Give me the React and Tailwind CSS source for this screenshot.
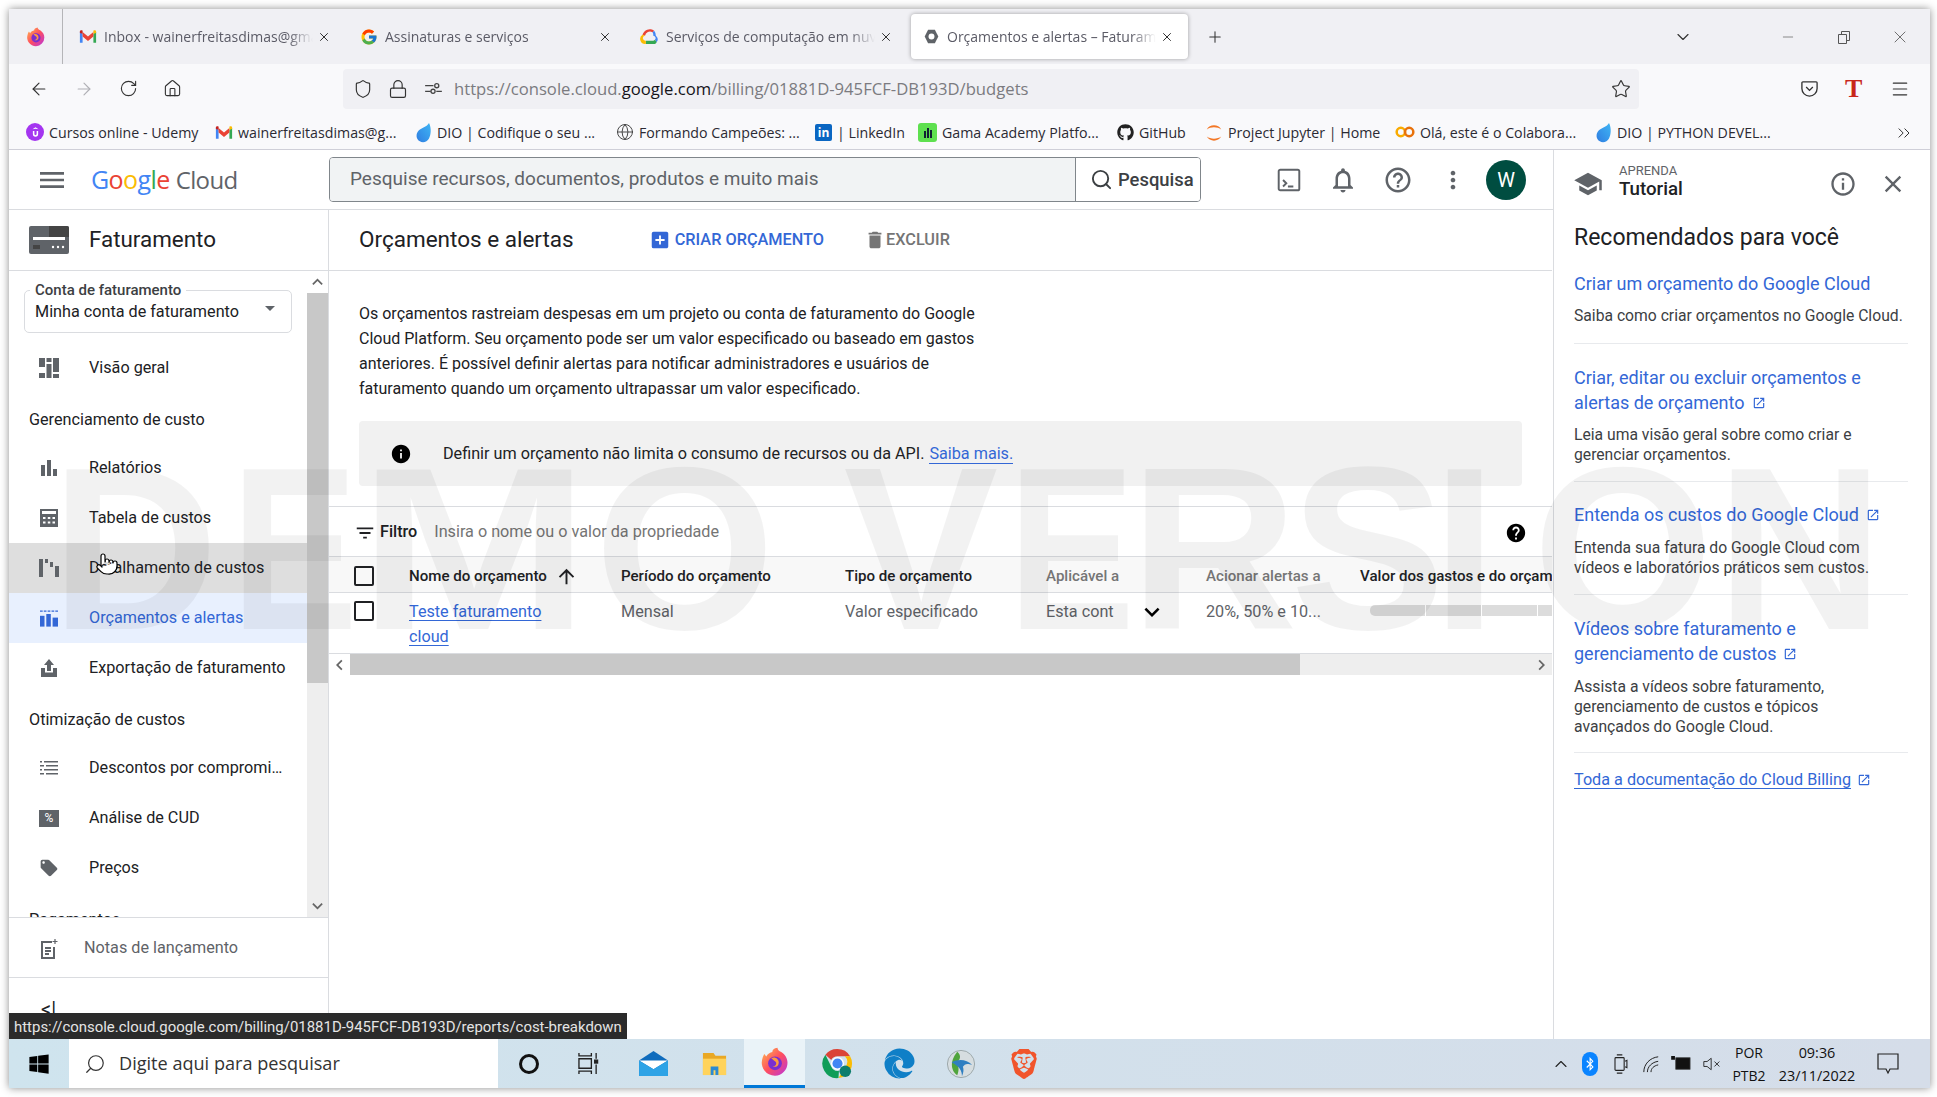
import React from 'react';
import { ArrowLeft, ArrowRight, RotateCw, Home, Shield, Lock, Star, Menu, Plus, X, ChevronDown, ChevronsRight, Minus, Globe, Search, ChevronUp, Pointer } from 'lucide-react';
import { FcGoogle } from 'react-icons/fc';
import { FaGithub, FaEdge, FaWindows, FaBluetoothB } from 'react-icons/fa';
import { SiBrave } from 'react-icons/si';
import {
  MdMenu, MdNotificationsNone, MdHelpOutline, MdMoreVert, MdSchool, MdInfoOutline, MdClose,
  MdArrowDropDown, MdBarChart, MdLocalOffer, MdKeyboardArrowUp, MdKeyboardArrowDown,
  MdKeyboardArrowLeft, MdKeyboardArrowRight, MdAddBox, MdDelete, MdInfo, MdHelp, MdFilterList, MdArrowUpward, MdOpenInNew
} from 'react-icons/md';

const GmailIcon = () => (
  <svg viewBox="0 0 20 16" className="w-[18px] h-[15px] shrink-0">
    <path d="M1 15V3l3 2v10z" fill="#4285f4" />
    <path d="M19 15V3l-3 2v10z" fill="#34a853" />
    <path d="M4 8V3L10 8l6-5v5l-6 5z" fill="#ea4335" />
    <path d="M1 4V2.500C1 1 3 .5 4 1.500l0 3.500z" fill="#c5221f" />
    <path d="M19 4V2.500C19 1 17 .5 16 1.500L16 5z" fill="#fbbc04" />
  </svg>
);

const GcpIcon = () => (
  <svg viewBox="0 0 24 20" className="w-[20px] h-[17px] shrink-0">
    <path d="M15 5 17 3a9 9 0 0 0-14 5l3 1a6 6 0 0 1 9-4z" fill="#ea4335" />
    <path d="M19 9a9 9 0 0 0-2-6l-2 2a6 6 0 0 1 1 4 3 3 0 0 1 2 5l2 3a6 6 0 0 0-1-8z" fill="#4285f4" />
    <path d="M7 19h11a5 5 0 0 0 2-2l-2-3a3 3 0 0 1-2 1H7z" fill="#34a853" />
    <path d="M7 19v-4a3 3 0 0 1-1-6L3 8a6 6 0 0 0 4 11z" fill="#fbbc04" />
  </svg>
);

const FirefoxIcon = ({ size = 20 }) => (
  <svg viewBox="0 0 24 24" width={size} height={size} className="shrink-0">
    <defs>
      <linearGradient id="ffa" x1="0" y1="0" x2="1" y2="1">
        <stop offset="0" stopColor="#ffbd4f" />
        <stop offset="0.5" stopColor="#ff4f5e" />
        <stop offset="1" stopColor="#b833e1" />
      </linearGradient>
    </defs>
    <path d="M12 23A10.500 10.500 0 0 1 2 9c.5-2 1.200-3 1.500-3.500L5 7.500C6 5.500 8 4.500 10 4c-.5-1 .5-3 4-3.500 0 1.500 1 2.500 3 3.500 3 2 5 5 5 8.500A10.500 10.500 0 0 1 12 23z" fill="url(#ffa)" />
    <circle cx="12" cy="13" r="5.500" fill="#7a2fd0" />
    <path d="M9 9c3-1.500 6 .5 6 3.500s-3 4-5 3c2 0 3-1 3-2.500S11 11 9 9z" fill="#ff9a3c" />
  </svg>
);

const DioIcon = () => (
  <svg viewBox="0 0 18 24" className="w-[17px] h-[22px] shrink-0">
    <defs>
      <linearGradient id="dio" x1="0" y1="1" x2="1" y2="0">
        <stop offset="0" stopColor="#2f7de1" />
        <stop offset="1" stopColor="#3fb6f5" />
      </linearGradient>
    </defs>
    <path d="M15 1c3 6 2 13 0 17-2 4-7 5-10 3C1 19 0 13 4 9c3-3 8-3 11-8z" fill="url(#dio)" />
  </svg>
);

const UdemyIcon = () => (
  <span className="w-[18px] h-[18px] rounded-full bg-[#a435f0] flex items-center justify-center shrink-0">
    <svg viewBox="0 0 12 14" className="w-[9px] h-[11px]">
      <path d="M6 0 10 2.500 6 2 2 2.500z" fill="#fff" />
      <path d="M2.500 5v4a3.500 3.500 0 0 0 7 0V5H7.500v4a1.500 1.500 0 0 1-3 0V5z" fill="#fff" />
    </svg>
  </span>
);

const GamaIcon = () => (
  <span className="w-[19px] h-[19px] rounded-[3px] bg-[#5ee04f] flex items-end justify-center gap-[1px] pb-[4px] shrink-0">
    <span className="w-[2px] h-[7px] bg-[#123]" />
    <span className="w-[2px] h-[10px] bg-[#123]" />
    <span className="w-[2px] h-[8px] bg-[#123]" />
  </span>
);

const JupyterIcon = () => (
  <svg viewBox="0 0 20 24" className="w-[18px] h-[22px] shrink-0">
    <path d="M2 8c3-6 13-6 16 0-4-3-12-3-16 0z" fill="#f37726" />
    <path d="M2 16c3 6 13 6 16 0-4 3-12 3-16 0z" fill="#f37726" />
  </svg>
);

const ColabIcon = () => (
  <svg viewBox="0 0 24 14" className="w-[20px] h-[12px] shrink-0">
    <circle cx="7" cy="7" r="5" fill="none" stroke="#f9ab00" strokeWidth="3" />
    <circle cx="17" cy="7" r="5" fill="none" stroke="#e8710a" strokeWidth="3" />
  </svg>
);

const ChromeIcon = () => (
  <svg viewBox="0 0 32 32" className="w-[31px] h-[31px]">
    <path d="M16 1a15 15 0 0 1 13 7.500H16a7.500 7.500 0 0 0-6.500 3.800L3.500 7A15 15 0 0 1 16 1z" fill="#db4437" />
    <path d="M29 8.500A15 15 0 0 1 17 31l6.500-11a7.500 7.500 0 0 0 0-11.500z" fill="#fbbc04" />
    <path d="M3.500 7 9.500 19a7.500 7.500 0 0 0 8 4.500L17 31A15 15 0 0 1 3.500 7z" fill="#0f9d58" />
    <circle cx="16" cy="16" r="6" fill="#4285f4" stroke="#fff" strokeWidth="1.500" />
    <circle cx="24" cy="24" r="6" fill="#0d7d6c" />
  </svg>
);

const GlobeLogo = () => (
  <svg viewBox="0 0 32 32" className="w-[30px] h-[30px]">
    <circle cx="16" cy="16" r="14.500" fill="#d6dde0" stroke="#9aa5a8" />
    <path d="M12 3c5 4 3 9-1 12 3 3 3 8 1 13-6-4-9-14 0-25z" fill="#4fa43c" />
    <path d="M6 14c8-4 16-3 22 3-6-2-8-1-10 2 1 3 1 6-1 10 0-6-2-10-11-15z" fill="#2f7fc1" />
  </svg>
);

const MailIcon = () => (
  <svg viewBox="0 0 32 28" className="w-[31px] h-[27px]">
    <path d="M1 11 16 1l15 10v16H1z" fill="#0f6cbd" />
    <path d="M1 11h30L16 20z" fill="#fff" />
    <path d="M1 11l15 9 15-9v16H1z" fill="#2ea3e6" />
  </svg>
);

const FolderIcon = () => (
  <svg viewBox="0 0 28 28" className="w-[27px] h-[27px]">
    <path d="M2 3h11l2 3h11v20H2z" fill="#e9a825" />
    <path d="M2 9h24v17H2z" fill="#ffd35c" />
    <path d="M10 17h8v9h-3v-5h-2v5h-3z" fill="#2a8ad4" />
  </svg>
);

const TaskViewIcon = () => (
  <svg viewBox="0 0 22 24" className="w-[21px] h-[23px]" fill="none" stroke="#222" strokeWidth="1.400">
    <path d="M1 1v3h13V1M1 23v-3h13v3M1 7h13v10H1zM19 1v6M19 13v10" />
    <rect x="17.500" y="8.500" width="3" height="3" fill="#222" />
  </svg>
);

const TerminalIcon = () => (
  <svg viewBox="0 0 24 24" className="w-[26px] h-[26px]" fill="none" stroke="#5f6368" strokeWidth="1.800">
    <rect x="2.500" y="2.500" width="19" height="19" rx="1.500" />
    <path d="m6.500 12 3 3-3 3M11 18h5" />
  </svg>
);

const BillingIcon = () => (
  <svg viewBox="0 0 40 28" className="w-[40px] h-[28px]">
    <rect width="40" height="28" rx="2" fill="#5f6368" />
    <path d="M20 0h18a2 2 0 0 1 2 2v9H20z" fill="#444" />
    <rect x="4" y="11" width="32" height="3" fill="#fff" />
    <rect x="4" y="19" width="7" height="4" fill="#444" />
    <circle cx="24" cy="21" r="1.200" fill="#fff" />
    <circle cx="29" cy="21" r="1.200" fill="#fff" />
    <circle cx="34" cy="21" r="1.200" fill="#fff" />
  </svg>
);

const OverviewIcon = () => (
  <svg viewBox="0 0 20 20" className="w-[20px] h-[20px]" fill="#5f6368">
    <rect width="6" height="9" /><rect y="15" width="6" height="5" />
    <rect x="7.500" width="5" height="4" /><rect x="7.500" y="6" width="5" height="14" />
    <rect x="14" width="6" height="14" /><rect x="14" y="16" width="6" height="4" />
  </svg>
);

const CostTableIcon = () => (
  <svg viewBox="0 0 18 18" className="w-[18px] h-[18px]">
    <rect width="18" height="18" fill="#5f6368" />
    <rect x="2" y="2" width="14" height="3" fill="#fff" />
    <path d="M3 8h2.500v2H3zM7.800 8h2.500v2H7.800zM12.500 8H15v2h-2.500zM3 12.500h2.500v2H3zM7.800 12.500h2.500v2H7.800zM12.500 12.500H15v2h-2.500z" fill="#fff" />
  </svg>
);

const BreakdownIcon = () => (
  <svg viewBox="0 0 20 20" className="w-[20px] h-[20px]" fill="#5f6368">
    <rect y="1" width="4" height="18" /><rect x="6" y="1" width="3" height="4" /><rect x="11" y="4" width="3" height="5" /><rect x="16" y="8" width="4" height="11" />
  </svg>
);

const BudgetIcon = () => (
  <svg viewBox="0 0 20 18" className="w-[18px] h-[17px]" fill="#3367d6">
    <path d="M0 0h3v1.500H0zM4.200 0h3v1.500h-3zM8.500 0h3v1.500h-3zM12.800 0h3v1.500h-3zM17 0h3v1.500h-3z" />
    <rect y="6" width="5" height="12" /><rect x="7" y="4" width="5" height="14" /><rect x="14" y="8" width="6" height="10" />
  </svg>
);

const ExportIcon = () => (
  <svg viewBox="0 0 16 18" className="w-[16px] h-[18px]" fill="#5f6368">
    <path d="M8 0 13 6H10v6H6V6H3z" />
    <path d="M0 9h4v4.500h8V9h4v9H0z" />
  </svg>
);

const DiscountListIcon = () => (
  <svg viewBox="0 0 18 14" className="w-[18px] h-[14px]" fill="#5f6368">
    <rect width="2" height="1.500" /><rect x="4" width="14" height="1.500" />
    <rect y="4" width="4" height="1.500" /><rect x="6" y="4" width="12" height="1.500" />
    <rect y="8" width="2" height="1.500" /><rect x="4" y="8" width="14" height="1.500" />
    <rect y="12" width="4" height="1.500" /><rect x="6" y="12" width="12" height="1.500" />
  </svg>
);

const NotesIcon = () => (
  <svg viewBox="0 0 18 20" className="w-[18px] h-[20px]" fill="none" stroke="#5f6368" strokeWidth="2">
    <path d="M12 3H2v16h12V8M5 9h6M5 12h6M5 15h4" />
    <path d="M15 0v5M12.500 2.500h5" strokeWidth="1.200" />
  </svg>
);

const SideItem = ({ icon, label, active, hover, truncate }) => (
  <div className={`h-[50px] flex items-center shrink-0 ${active ? 'bg-[#e8f0fe] text-[#3367d6]' : hover ? 'bg-[#dedede] text-[#202124]' : 'text-[#202124]'}`}>
    <span className="w-[80px] flex justify-center shrink-0">{icon}</span>
    <span className={`text-[16.2px] ${truncate ? 'truncate w-[197px]' : 'whitespace-nowrap'}`}>{label}</span>
  </div>
);

const SideHeading = ({ children }) => (
  <div className="h-[50px] shrink-0 pt-[4px] pl-[20px] flex items-center text-[16.2px] text-[#202124]">{children}</div>
);

const Tab = ({ icon, label, active }) => (
  <div className={`w-[277px] h-[45px] flex items-center pl-[12px] pr-[14px] shrink-0 rounded-[4px] ${active ? 'bg-white shadow-[0_0_4px_rgba(0,0,0,0.35)]' : ''}`}>
    <span className="w-[20px] flex justify-center shrink-0 mr-[-2px] ml-[-2px]">{icon}</span>
    <span className="ml-[8px] w-[209px] overflow-hidden whitespace-nowrap text-[14px] text-[#5b5b66] [mask-image:linear-gradient(to_right,black_88%,transparent)]">{label}</span>
    <X size={14} strokeWidth={1.6} className="ml-auto text-[#222]" />
  </div>
);

const Bookmark = ({ icon, label, className }) => (
  <div className={`flex items-center gap-[5px] shrink-0 text-[14.2px] text-[#2b2a33] whitespace-nowrap ${className}`}>
    {icon}
    <span>{label}</span>
  </div>
);

const PanelLink = ({ children, icon }) => (
  <p className="text-[18px] leading-[25px] text-[#3367d6]">
    {children}
    {icon && <MdOpenInNew size={14} className="inline ml-[7px] mb-[2px]" />}
  </p>
);

const PanelDesc = ({ children, className }) => (
  <p className={`text-[15.7px] leading-[20px] text-[#3c4043] ${className}`}>{children}</p>
);

const TaskbarClock = () => (
  <>
    <div className="ml-[9px] w-[38px] text-center text-[14px] leading-[23px] font-['Open_Sans',sans-serif] text-[#111] shrink-0">POR<br />PTB2</div>
    <div className="ml-[7px] w-[84px] text-center text-[14.4px] leading-[23px] font-['Open_Sans',sans-serif] text-[#111] shrink-0">09:36<br />23/11/2022</div>
  </>
);

const App = () => {
  return (
    <div className="relative w-[1937px] h-[1097px] overflow-hidden bg-white p-[9px] font-['Roboto',sans-serif]">
      <div className="w-[1921px] h-[1079px] flex flex-col bg-white shadow-[0_0_8px_rgba(0,0,0,0.45)]">
        {/* browser tabs */}
        <div className="h-[55px] shrink-0 bg-[#f0f0f4] flex items-center font-['Open_Sans',sans-serif]">
          <div className="w-[54px] h-full flex items-center justify-center border-r border-[#b5b5b8]">
            <FirefoxIcon size={20} />
          </div>
          <div className="ml-[5px] flex items-center gap-[4px]">
            <Tab icon={<GmailIcon />} label="Inbox - wainerfreitasdimas@gmail.com" />
            <Tab icon={<FcGoogle size={18} />} label="Assinaturas e serviços" />
            <Tab icon={<GcpIcon />} label="Serviços de computação em nuvem" />
            <Tab active icon={<SettingsGlyph />} label="Orçamentos e alertas – Faturamento" />
          </div>
          <Plus size={18} strokeWidth={1.4} className="ml-[18px] text-[#333]" />
          <ChevronDown size={20} strokeWidth={1.4} className="ml-[449px] text-[#333]" />
          <Minus size={16} strokeWidth={1} className="ml-[87px] text-[#555]" />
          <svg viewBox="0 0 14 14" className="ml-[41px] w-[14px] h-[14px]" fill="none" stroke="#555">
            <path d="M1.500 4.500h8v9h-8zM4.500 4.500v-3h8v9h-3" />
          </svg>
          <X size={20} strokeWidth={1} className="ml-[39px] text-[#555]" />
        </div>

        {/* url bar */}
        <div className="h-[49px] shrink-0 bg-[#f9f9fb] flex items-center font-['Open_Sans',sans-serif]">
          <div className="w-[334px] flex items-center shrink-0 pl-[20px] gap-[25px] text-[#333]">
            <ArrowLeft size={20} strokeWidth={1.4} />
            <ArrowRight size={20} strokeWidth={1.4} className="text-[#b0b0b5]" />
            <RotateCw size={19} strokeWidth={1.4} />
            <Home size={19} strokeWidth={1.4} />
          </div>
          <div className="w-[1296px] h-[40px] rounded-[4px] bg-[#f0f0f4] flex items-center pl-[10px] shrink-0 text-[#333]">
            <Shield size={20} strokeWidth={1.4} />
            <Lock size={20} strokeWidth={1.4} className="ml-[15px]" />
            <svg viewBox="0 0 18 14" className="ml-[17px] w-[17px] h-[13px]" fill="none" stroke="#444" strokeWidth="1.400">
              <path d="M0 4h9M0 10h6M12 10h6" /><circle cx="12.500" cy="4" r="2.200" /><circle cx="8.500" cy="10" r="2.200" />
            </svg>
            <span className="ml-[12px] mt-[2px] text-[16.65px] text-[#7b7b80] whitespace-nowrap">
              https://console.cloud.<span className="text-[#15141a]">google.com</span>/billing/01881D-945FCF-DB193D/budgets
            </span>
            <Star size={20} strokeWidth={1.4} className="ml-auto mr-[8px]" />
          </div>
          <svg viewBox="0 0 20 20" className="ml-[161px] w-[19px] h-[19px]" fill="none" stroke="#333" strokeWidth="1.400">
            <path d="M3 3h14a1 1 0 0 1 1 1v6a8 8 0 0 1-16 0V4a1 1 0 0 1 1-1z" /><path d="m6.500 8.500 3.500 3.500 3.500-3.500" />
          </svg>
          <span className="ml-[26px] text-[26px] leading-none font-bold font-['Liberation_Serif',serif] text-[#c8271b]">T</span>
          <Menu size={20} strokeWidth={1.4} className="ml-[28px] text-[#333]" />
        </div>

        {/* bookmarks */}
        <div className="h-[37px] shrink-0 bg-[#f9f9fb] border-b border-[#cfcfd8] flex items-center pl-[17px] pt-[3px] font-['Open_Sans',sans-serif]">
          <Bookmark className="w-[189px]" icon={<UdemyIcon />} label="Cursos online - Udemy" />
          <Bookmark className="w-[200px]" icon={<GmailIcon />} label="wainerfreitasdimas@g..." />
          <Bookmark className="w-[201px]" icon={<DioIcon />} label="DIO | Codifique o seu ..." />
          <Bookmark className="w-[199px]" icon={<Globe size={18} strokeWidth={1.3} className="text-[#444]" />} label="Formando Campeões: ..." />
          <Bookmark
            className="w-[103px]"
            icon={<span className="w-[17px] h-[17px] rounded-[2px] bg-[#0a66c2] text-white text-[12px] leading-[17px] font-bold text-center">in</span>}
            label="| LinkedIn"
          />
          <Bookmark className="w-[199px]" icon={<GamaIcon />} label="Gama Academy Platfo..." />
          <Bookmark className="w-[88px]" icon={<FaGithub size={17} className="text-[#222]" />} label="GitHub" />
          <Bookmark className="w-[190px]" icon={<JupyterIcon />} label="Project Jupyter | Home" />
          <Bookmark className="w-[200px]" icon={<ColabIcon />} label="Olá, este é o Colabora..." />
          <Bookmark className="w-[299px]" icon={<DioIcon />} label="DIO | PYTHON DEVEL..." />
          <ChevronsRight size={20} strokeWidth={1.2} className="text-[#333]" />
        </div>

        {/* console */}
        <div className="flex-1 min-h-0 flex">
          <div className="w-[1544px] flex flex-col shrink-0">
            {/* top bar */}
            <div className="h-[60px] shrink-0 border-b border-[#dadce0] flex items-center">
              <MdMenu size={32} className="ml-[27px] text-[#5f6368]" />
              <span className="ml-[23px] w-[170px] text-[25px] tracking-[-0.6px] font-['Open_Sans',sans-serif] whitespace-nowrap">
                <span className="text-[#4285f4]">G</span><span className="text-[#ea4335]">o</span><span className="text-[#fbbc04]">o</span><span className="text-[#4285f4]">g</span><span className="text-[#34a853]">l</span><span className="text-[#ea4335]">e</span>
                <span className="text-[#5f6368] text-[24px] ml-[6px]">Cloud</span>
              </span>
              <div className="ml-[68px] w-[872px] h-[45px] flex border border-[#80868b] rounded-[4px] overflow-hidden">
                <div className="flex-1 bg-[#f1f3f4] flex items-center pl-[20px] text-[19px] text-[#5f6368] whitespace-nowrap">
                  Pesquise recursos, documentos, produtos e muito mais
                </div>
                <div className="w-[125px] bg-white border-l border-[#80868b] flex items-center pl-[14px] gap-[5px] text-[#3c4043]">
                  <Search size={23} strokeWidth={2} />
                  <span className="text-[18.4px] font-medium whitespace-nowrap">Pesquisa</span>
                </div>
              </div>
              <span className="ml-[75px]"><TerminalIcon /></span>
              <MdNotificationsNone size={30} className="ml-[26px] text-[#5f6368]" />
              <MdHelpOutline size={30} className="ml-[25px] text-[#5f6368]" />
              <MdMoreVert size={28} className="ml-[26px] text-[#5f6368]" />
              <span className="ml-[19px] w-[40px] h-[40px] rounded-full bg-[#004d40] text-white flex items-center justify-center text-[20px]">W</span>
            </div>

            <div className="flex-1 min-h-0 flex">
              {/* sidebar */}
              <div className="w-[320px] shrink-0 border-r border-[#dadce0] flex flex-col">
                <div className="h-[61px] shrink-0 border-b border-[#dadce0] flex items-center pl-[20px]">
                  <BillingIcon />
                  <span className="ml-[20px] text-[22.4px] text-[#202124]">Faturamento</span>
                </div>
                <div className="h-[647px] shrink-0 flex overflow-hidden border-b border-[#dadce0]">
                  <div className="w-[298px] shrink-0 flex flex-col">
                    <div className="relative shrink-0 mt-[19px] mb-[10px] ml-[15px] w-[268px] h-[43px] rounded-[5px] border border-[#dadce0] flex items-center pl-[10px] pt-[2px]">
                      <span className="absolute -top-[10px] left-[5px] bg-white px-[5px] text-[15px] leading-[18px] font-medium text-[#3c4043] whitespace-nowrap">Conta de faturamento</span>
                      <span className="text-[16.2px] text-[#202124] whitespace-nowrap">Minha conta de faturamento</span>
                      <MdArrowDropDown size={24} className="absolute right-[9px] top-[5px] text-[#5f6368]" />
                    </div>
                    <SideItem icon={<OverviewIcon />} label="Visão geral" />
                    <SideHeading>Gerenciamento de custo</SideHeading>
                    <SideItem icon={<MdBarChart size={24} className="text-[#5f6368]" />} label="Relatórios" />
                    <SideItem icon={<CostTableIcon />} label="Tabela de custos" />
                    <SideItem hover icon={<BreakdownIcon />} label="Detalhamento de custos" />
                    <SideItem active icon={<BudgetIcon />} label="Orçamentos e alertas" />
                    <SideItem icon={<ExportIcon />} label="Exportação de faturamento" />
                    <SideHeading>Otimização de custos</SideHeading>
                    <SideItem truncate icon={<DiscountListIcon />} label="Descontos por compromisso de uso" />
                    <SideItem
                      icon={<span className="w-[20px] h-[17px] bg-[#5f6368] text-white text-[12px] leading-[17px] text-center">%</span>}
                      label="Análise de CUD"
                    />
                    <SideItem icon={<MdLocalOffer size={20} className="text-[#5f6368]" />} label="Preços" />
                    <SideHeading>Pagamentos</SideHeading>
                  </div>
                  <div className="w-[21px] shrink-0 bg-[#eeeeee] flex flex-col">
                    <div className="h-[22px] bg-white flex items-center justify-center">
                      <MdKeyboardArrowUp size={22} className="text-[#666]" />
                    </div>
                    <div className="h-[390px] bg-[#c8c8c8]" />
                    <div className="mt-auto h-[22px] flex items-center justify-center">
                      <MdKeyboardArrowDown size={22} className="text-[#666]" />
                    </div>
                  </div>
                </div>
                <div className="h-[60px] shrink-0 border-b border-[#dadce0] flex items-center pl-[31px] pt-[2px] text-[#5f6368]">
                  <NotesIcon />
                  <span className="ml-[26px] text-[16.2px]">Notas de lançamento</span>
                </div>
                <div className="pl-[32px] pt-[19px] text-[#202124] text-[20px] leading-[24px]">&lt;|</div>
              </div>

              {/* main */}
              <div className="w-[1223px] shrink-0 min-w-0 flex flex-col">
                <div className="h-[61px] shrink-0 border-b border-[#dadce0] flex items-center pl-[30px]">
                  <h1 className="text-[22.5px] text-[#202124] whitespace-nowrap">Orçamentos e alertas</h1>
                  <MdAddBox size={22} className="ml-[75px] text-[#3367d6]" />
                  <span className="ml-[4px] text-[16.3px] font-medium text-[#3367d6] whitespace-nowrap">CRIAR ORÇAMENTO</span>
                  <MdDelete size={22} className="ml-[40px] text-[#757575]" />
                  <span className="text-[16.3px] font-medium text-[#757575]">EXCLUIR</span>
                </div>
                <p className="mt-[30px] ml-[30px] w-[640px] shrink-0 text-[16px] leading-[25px] text-[#202124]">
                  Os orçamentos rastreiam despesas em um projeto ou conta de faturamento do Google Cloud Platform. Seu orçamento pode ser um valor especificado ou baseado em gastos anteriores. É possível definir alertas para notificar administradores e usuários de faturamento quando um orçamento ultrapassar um valor especificado.
                </p>
                <div className="mt-[20px] ml-[30px] mr-[30px] h-[65px] shrink-0 rounded-[4px] bg-[#f1f1f1] flex items-center pl-[31px] pt-[1px] text-[16.2px] text-[#202124] whitespace-nowrap">
                  <MdInfo size={22} className="text-black" />
                  <span className="ml-[31px]">Definir um orçamento não limita o consumo de recursos ou da API.</span>
                  <span className="ml-[5px] text-[#3367d6] border-b border-[#3367d6] leading-[18px]">Saiba mais.</span>
                </div>
                <div className="mt-[20px] h-[51px] shrink-0 border-y border-[#dadce0] flex items-center pl-[25px] pt-[2px]">
                  <MdFilterList size={22} className="text-[#202124]" />
                  <span className="ml-[4px] text-[16.2px] font-medium text-[#202124]">Filtro</span>
                  <span className="ml-[17px] text-[16.2px] text-[#757575]">Insira o nome ou o valor da propriedade</span>
                  <MdHelp size={22} className="ml-auto mr-[25px] text-black" />
                </div>

                <div className="grid grid-cols-[80px_212px_224px_201px_160px_154px_1fr] h-[36px] shrink-0 bg-[#f8f8f8] border-b border-[#dadce0] items-center pt-[3px] text-[15.1px] font-medium text-[#202124] whitespace-nowrap overflow-hidden">
                  <span className="pl-[25px]"><span className="block w-[20px] h-[20px] rounded-[2px] border-2 border-[#202124]" /></span>
                  <span className="flex items-center">Nome do orçamento<MdArrowUpward size={23} className="ml-[8px]" /></span>
                  <span>Período do orçamento</span>
                  <span>Tipo de orçamento</span>
                  <span className="text-[#757575]">Aplicável a</span>
                  <span className="text-[#757575]">Acionar alertas a</span>
                  <span>Valor dos gastos e do orçamento</span>
                </div>
                <div className="grid grid-cols-[80px_212px_224px_201px_160px_154px_1fr] h-[60px] shrink-0 text-[16.2px] leading-[25px] text-[#5f6368] pt-[6px] overflow-hidden">
                  <span className="pl-[25px] pt-[2px]"><span className="block w-[20px] h-[20px] rounded-[2px] border-2 border-[#202124]" /></span>
                  <span className="text-[#3367d6]">
                    <span className="underline underline-offset-[3px]">Teste faturamento</span><br />
                    <span className="underline underline-offset-[3px]">cloud</span>
                  </span>
                  <span>Mensal</span>
                  <span>Valor especificado</span>
                  <span className="flex items-start">
                    Esta cont
                    <MdKeyboardArrowDown size={30} className="ml-[23px] -mt-[2px] text-black" />
                  </span>
                  <span className="whitespace-nowrap">20%, 50% e 10...</span>
                  <span className="pl-[10px] pt-[6px] overflow-hidden flex gap-[1px]">
                    <span className="w-[55px] h-[11px] bg-[#dcdcdc] rounded-l-[5px] shrink-0" />
                    <span className="w-[55px] h-[11px] bg-[#dcdcdc] shrink-0" />
                    <span className="w-[55px] h-[11px] bg-[#dcdcdc] shrink-0" />
                    <span className="w-[55px] h-[11px] bg-[#dcdcdc] shrink-0" />
                  </span>
                </div>
                <div className="h-[22px] shrink-0 border-t border-[#dadce0] bg-[#eeeeee] flex">
                  <div className="w-[21px] bg-white flex items-center justify-center"><MdKeyboardArrowLeft size={22} className="text-[#666]" /></div>
                  <div className="w-[950px] bg-[#c8c8c8]" />
                  <div className="ml-auto w-[21px] flex items-center justify-center"><MdKeyboardArrowRight size={22} className="text-[#666]" /></div>
                </div>
              </div>
            </div>
          </div>

          {/* tutorial panel */}
          <div className="w-[377px] shrink-0 border-l border-[#dadce0] flex flex-col">
            <div className="h-[60px] shrink-0 flex items-center pl-[19px] pr-[23px] pt-[8px]">
              <MdSchool size={30} className="text-[#5f6368]" />
              <div className="ml-[16px] mb-[4px]">
                <p className="text-[13px] leading-[14px] text-[#5f6368]">APRENDA</p>
                <p className="text-[18.7px] leading-[22px] font-medium text-[#202124]">Tutorial</p>
              </div>
              <MdInfoOutline size={28} className="ml-auto text-[#5f6368]" />
              <MdClose size={28} className="ml-[22px] text-[#5f6368]" />
            </div>
            <div className="pl-[20px] pr-[22px]">
              <h2 className="mt-[12px] mb-[17px] text-[23px] leading-[32px] text-[#202124] whitespace-nowrap">Recomendados para você</h2>
              <PanelLink>Criar um orçamento do Google Cloud</PanelLink>
              <PanelDesc className="mt-[10px] pb-[17px] border-b border-[#e8eaed]">Saiba como criar orçamentos no Google Cloud.</PanelDesc>
              <div className="pt-[21px]">
                <PanelLink icon>Criar, editar ou excluir orçamentos e alertas de orçamento</PanelLink>
                <PanelDesc className="mt-[10px] pb-[16px] border-b border-[#e8eaed]">Leia uma visão geral sobre como criar e gerenciar orçamentos.</PanelDesc>
              </div>
              <div className="pt-[20px]">
                <PanelLink icon>Entenda os custos do Google Cloud</PanelLink>
                <PanelDesc className="mt-[11px] pb-[16px] border-b border-[#e8eaed]">Entenda sua fatura do Google Cloud com vídeos e laboratórios práticos sem custos.</PanelDesc>
              </div>
              <div className="pt-[21px]">
                <PanelLink icon>Vídeos sobre faturamento e gerenciamento de custos</PanelLink>
                <div className="mt-[11px] pb-[15px] border-b border-[#e8eaed]">
                  <PanelDesc className="w-[300px]">Assista a vídeos sobre faturamento, gerenciamento de custos e tópicos avançados do Google Cloud.</PanelDesc>
                </div>
              </div>
              <p className="mt-[17px] text-[16.2px] leading-[20px] text-[#3367d6]">
                <span className="underline underline-offset-[3px]">Toda a documentação do Cloud Billing</span>
                <MdOpenInNew size={14} className="inline ml-[6px] mb-[2px]" />
              </p>
            </div>
          </div>
        </div>

        {/* windows taskbar */}
        <div className="h-[49px] shrink-0 bg-gradient-to-r from-[#cfe4ee] to-[#d5dde9] flex items-center relative">
          <div className="w-[60px] flex justify-center shrink-0"><FaWindows size={22} className="text-black" /></div>
          <div className="w-[429px] h-full bg-white flex items-center pl-[15px] shrink-0 font-['Open_Sans',sans-serif] text-[18.1px] text-[#333]">
            <Search size={22} strokeWidth={1.3} className="-scale-x-100" />
            <span className="ml-[13px] whitespace-nowrap">Digite aqui para pesquisar</span>
          </div>
          <span className="ml-[21px] w-[20px] h-[20px] rounded-full border-[3px] border-[#111] shrink-0" />
          <span className="ml-[39px] shrink-0"><TaskViewIcon /></span>
          <span className="ml-[39px] shrink-0"><MailIcon /></span>
          <span className="ml-[32px] shrink-0"><FolderIcon /></span>
          <div className="ml-[16px] w-[61px] h-full bg-[#eaf3f8] border-b-[3px] border-[#0078d7] flex items-center justify-center shrink-0"><FirefoxIcon size={30} /></div>
          <span className="ml-[17px] shrink-0"><ChromeIcon /></span>
          <FaEdge size={31} className="ml-[31px] shrink-0 text-[#0f7fc7]" />
          <span className="ml-[31px] shrink-0"><GlobeLogo /></span>
          <SiBrave size={30} className="ml-[33px] shrink-0 text-[#f1542b]" />
          <ChevronUp size={20} strokeWidth={1.3} className="ml-[512px] shrink-0 text-[#222]" />
          <span className="ml-[11px] w-[16px] h-[24px] rounded-[8px] bg-[#0a84ff] flex items-center justify-center shrink-0"><FaBluetoothB size={14} className="text-white" /></span>
          <svg viewBox="0 0 16 24" className="ml-[15px] w-[15px] h-[22px] shrink-0" fill="none" stroke="#222" strokeWidth="1.200">
            <rect x="2" y="5" width="10" height="14" rx="1" /><path d="M4 2h6M4 22h6M13 9l2-1v8l-2-1" />
          </svg>
          <svg viewBox="0 0 20 20" className="ml-[14px] w-[18px] h-[18px] shrink-0" fill="none" stroke="#222" strokeWidth="1.100">
            <path d="M2 19C2 10 9 3 18 2M6 19c0-6 5-11 12-12M10 19c0-4 3-7 8-8" />
          </svg>
          <svg viewBox="0 0 22 16" className="ml-[11px] w-[21px] h-[15px] shrink-0">
            <rect x="5" y="2" width="15" height="12" fill="#111" stroke="#222" /><rect x="0" y="0" width="4" height="4" fill="#111" />
          </svg>
          <svg viewBox="0 0 22 18" className="ml-[11px] w-[18px] h-[16px] shrink-0" fill="none" stroke="#222" strokeWidth="1.100">
            <path d="M1 6h4l5-4v14l-5-4H1zM14 6l6 6M20 6l-6 6" />
          </svg>
          <TaskbarClock />
          <svg viewBox="0 0 22 22" className="ml-[18px] w-[22px] h-[22px] shrink-0" fill="none" stroke="#222" strokeWidth="1.200">
            <path d="M1 1h20v15h-8l-2 4-2-4H1z" />
          </svg>
        </div>
      </div>

      {/* status tooltip over the sidebar */}
      <div className="absolute left-[9px] top-[1013px] w-[618px] h-[26px] overflow-hidden bg-[#2b2b2b] text-[#e5e5e5] text-[14.95px] leading-[29px] pl-[5px] whitespace-nowrap">
        https://console.cloud.google.com/billing/01881D-945FCF-DB193D/reports/cost-breakdown
      </div>

      {/* mouse pointer */}
      <Pointer size={24} strokeWidth={1.2} className="absolute left-[95px] top-[552px] text-black fill-white" />

      {/* trial watermark, letter offsets follow the reference */}
      <div className="absolute left-[51px] top-[416px] text-[232px] leading-[266px] font-bold font-['Liberation_Sans',sans-serif] text-black/5 whitespace-pre pointer-events-none">
        <span>D</span>
        <span className="inline-block ml-[12px] -mr-[27px] scale-x-[0.82] origin-left">E</span>
        <span className="inline-block scale-x-[1.2] origin-left">M</span>
        <span className="ml-[43px]">O</span>
        <span className="ml-[4px]"> </span>
        <span>V</span>
        <span className="inline-block ml-[10px] -mr-[26px] scale-x-[0.82] origin-left">E</span>
        <span className="-ml-[7px] -mr-[7px]">R</span>
        <span className="-mr-[13px]">S</span>
        <span>I</span>
        <span className="ml-[36px]">O</span>
        <span className="ml-[3px]">N</span>
      </div>
    </div>
  );
};

function SettingsGlyph() {
  return (
    <svg viewBox="0 0 20 20" className="w-[17px] h-[17px] shrink-0">
      <path d="M6 2h8l4 8-4 8H6l-4-8z" fill="#5f6368" />
      <circle cx="10" cy="10" r="3.500" fill="#fff" />
    </svg>
  );
}

export default App;
